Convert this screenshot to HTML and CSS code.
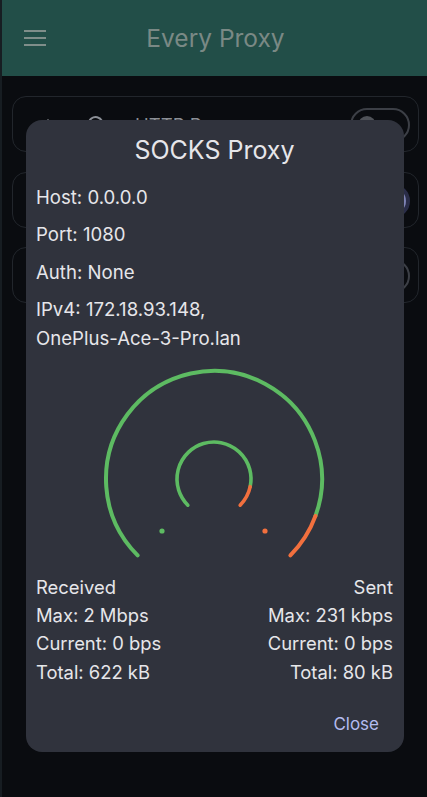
FILE: index.html
```html
<!DOCTYPE html>
<html lang="en">
<head>
<meta charset="utf-8">
<title>Every Proxy</title>
<link rel="stylesheet" href="styles.css">
</head>
<body>
<div class="app">
  <header class="topbar">
    <svg class="menu" width="22" height="16" viewBox="0 0 22 16"><path d="M0 1h22M0 8h22M0 15h22" stroke="currentColor" stroke-width="2.2" fill="none"/></svg>
    <h1 class="title">Every Proxy</h1>
  </header>
  <main class="list">
    <div class="card">
      <svg class="edit" width="14" height="14" viewBox="0 0 14 14"><path d="M2 12l1-4 6-6 3 3-6 6z" fill="currentColor"/></svg>
      <svg class="spin" width="18" height="18" viewBox="0 0 18 18"><path d="M15 6A7 7 0 1 0 15 12" stroke="currentColor" stroke-width="2" fill="none"/></svg>
      <span class="name">HTTP Proxy</span>
      <span class="switch"><span class="knob"></span></span>
    </div>
    <div class="card">
      <svg class="edit" width="14" height="14" viewBox="0 0 14 14"><path d="M2 12l1-4 6-6 3 3-6 6z" fill="currentColor"/></svg>
      <svg class="spin" width="18" height="18" viewBox="0 0 18 18"><path d="M15 6A7 7 0 1 0 15 12" stroke="currentColor" stroke-width="2" fill="none"/></svg>
      <span class="name"></span>
      <span class="switch on"><span class="knob"></span></span>
    </div>
    <div class="card">
      <svg class="edit" width="14" height="14" viewBox="0 0 14 14"><path d="M2 12l1-4 6-6 3 3-6 6z" fill="currentColor"/></svg>
      <svg class="spin" width="18" height="18" viewBox="0 0 18 18"><path d="M15 6A7 7 0 1 0 15 12" stroke="currentColor" stroke-width="2" fill="none"/></svg>
      <span class="name"></span>
      <span class="switch"><span class="knob"></span></span>
    </div>
  </main>

  <section class="dialog">
    <h2 class="dialog-title">SOCKS Proxy</h2>
    <p class="info">Host: 0.0.0.0</p>
    <p class="info">Port: 1080</p>
    <p class="info">Auth: None</p>
    <p class="info">IPv4: 172.18.93.148,<br>OnePlus-Ace-3-Pro.lan</p>
    <svg class="gauge" width="240" height="200" viewBox="0 0 240 200">
      <g fill="none" stroke-linecap="round">
        <path d="M43.63 195.37 A108 108 0 1 1 221.49 155.94" stroke="#5dbb62" stroke-width="4"/>
        <path d="M221.49 155.94 A108 108 0 0 1 196.37 195.37" stroke="#f2703e" stroke-width="4"/>
        <path d="M93.84 145.16 A37 37 0 1 1 156.19 126.69" stroke="#5dbb62" stroke-width="3.6"/>
        <path d="M156.19 126.69 A37 37 0 0 1 146.16 145.16" stroke="#f2703e" stroke-width="3.6"/>
      </g>
      <circle cx="68" cy="171" r="2.6" fill="#5dbb62"/>
      <circle cx="171" cy="171" r="2.6" fill="#f2703e"/>
    </svg>
    <div class="stats">
      <div class="col">
        <span>Received</span>
        <span>Max: 2 Mbps</span>
        <span>Current: 0 bps</span>
        <span>Total: 622 kB</span>
      </div>
      <div class="col right">
        <span>Sent</span>
        <span>Max: 231 kbps</span>
        <span>Current: 0 bps</span>
        <span>Total: 80 kB</span>
      </div>
    </div>
    <div class="actions">
      <button class="close">Close</button>
    </div>
  </section>
</div>
</body>
</html>
```

FILE: styles.css
```css
* { box-sizing: border-box; }
html, body {
  margin: 0;
  padding: 0;
  background: #0a0c10;
  font-family: Inter, "Noto Sans", sans-serif;
}
.app {
  width: 427px;
  height: 797px;
  border-left: 2px solid #171d22;
  overflow: hidden;
}
.topbar {
  height: 76px;
  background: #224e48;
  display: flex;
  align-items: center;
  padding-left: 22px;
  color: #7f8e8a;
}
.menu { flex: none; }
.title {
  margin: 0;
  flex: 1;
  text-align: center;
  padding-right: 42px;
  font-weight: 400;
  font-size: 24.5px;
  color: #7a8985;
}
.list {
  padding: 20px 8px 0 10px;
  display: flex;
  flex-direction: column;
  gap: 19.5px;
}
.card {
  height: 56px;
  border: 1px solid #22262c;
  border-radius: 14px;
  display: flex;
  align-items: center;
  padding: 0 8px 0 26px;
  color: #8b8f96;
}
.edit { margin-right: 34px; }
.spin { margin-right: 30px; }
.name {
  flex: 1;
  font-size: 18.5px;
  margin-top: 1px;
}
.switch {
  width: 60px;
  height: 34px;
  border: 2px solid #3c3f46;
  border-radius: 17px;
  display: flex;
  align-items: center;
  padding: 0 6px;
  margin-top: 2px;
}
.knob {
  width: 18px;
  height: 18px;
  border-radius: 50%;
  background: #4f5258;
}
.switch.on {
  justify-content: flex-end;
  background: #2a2d48;
  border-color: #2a2d48;
  padding: 0 2px;
}
.switch.on .knob {
  width: 26px;
  height: 26px;
  background: #7e83b4;
}
.dialog {
  position: fixed;
  top: 120px;
  left: 26px;
  width: 378px;
  height: 632px;
  background: #30333d;
  border-radius: 16px;
  padding: 15px 11px 0 10px;
  color: #e6e6ea;
  display: flex;
  flex-direction: column;
}
.dialog-title {
  margin: 0 0 17.5px;
  text-align: center;
  font-size: 25px;
  line-height: 30px;
  font-weight: 400;
}
.info {
  margin: 0 0 8.5px;
  font-size: 18.6px;
  line-height: 29px;
}
.gauge {
  display: block;
  align-self: center;
  margin: -2px 0 13px -2px;
}
.stats {
  display: flex;
  justify-content: space-between;
  font-size: 18.4px;
  line-height: 28.4px;
}
.col { display: flex; flex-direction: column; }
.col.right { align-items: flex-end; }
.actions {
  display: flex;
  justify-content: flex-end;
  margin-top: 18px;
}
.close {
  background: none;
  border: none;
  font-family: inherit;
  font-size: 17px;
  color: #b4bcf0;
  height: 40px;
  padding: 0 12px;
  margin-right: 2px;
}
```
